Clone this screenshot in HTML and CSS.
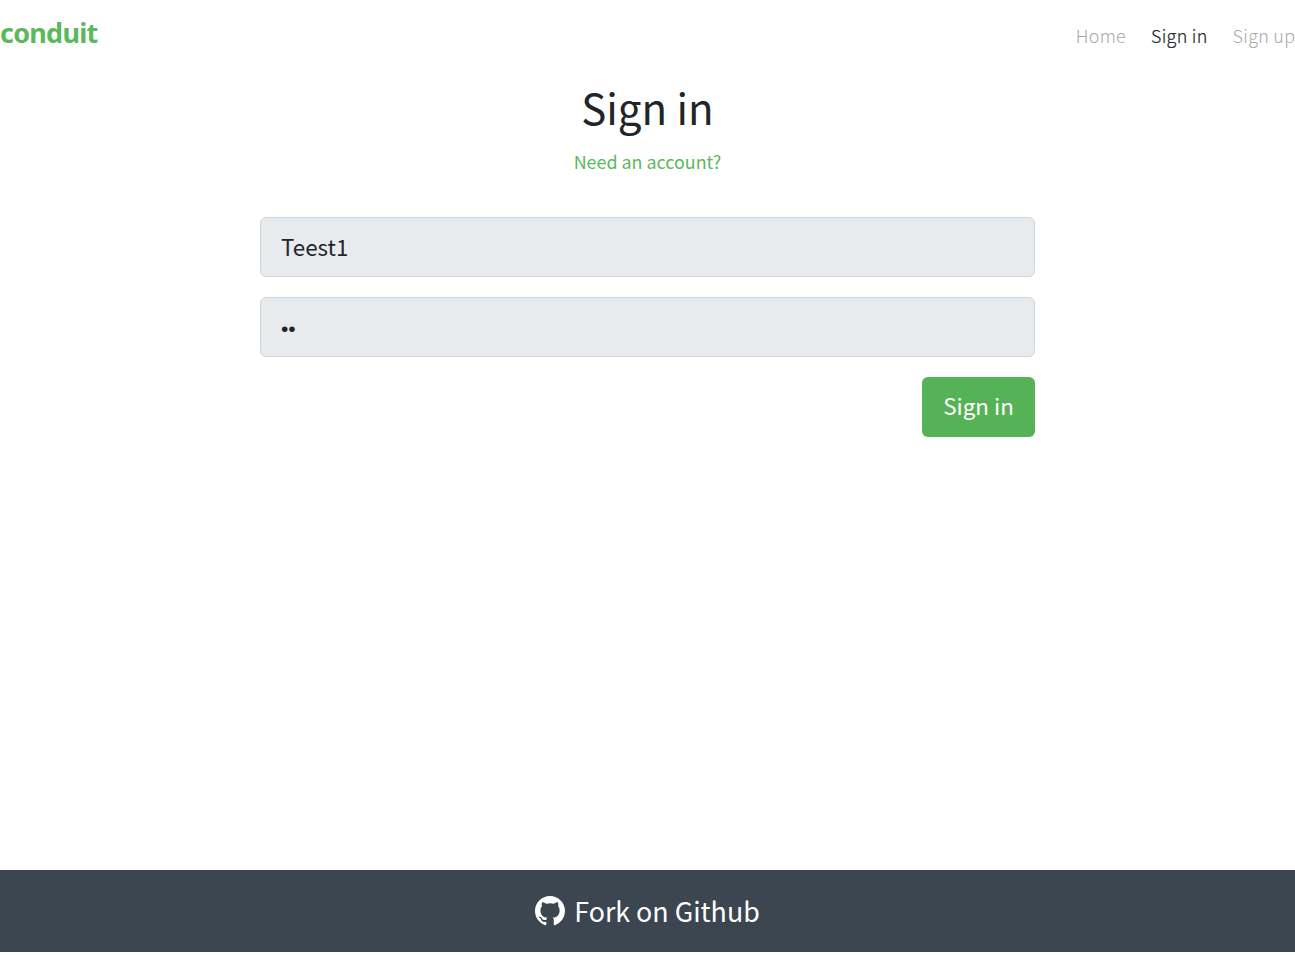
FILE: index.html
```html
<!DOCTYPE html>
<html lang="en">
<head>
<meta charset="utf-8">
<title>Conduit</title>
<link rel="stylesheet" href="styles.css">
</head>
<body class="page">
<nav class="navbar">
  <a class="brand">conduit</a>
  <div class="links"><a class="link">Home</a><a class="link active">Sign in</a><a class="link">Sign up</a></div>
</nav>
<main class="auth">
  <h1 class="title">Sign in</h1>
  <a class="need">Need an account?</a>
  <form class="form">
    <input class="field" type="text" value="Teest1">
    <input class="field password" type="password" value="ab">
    <button class="submit" type="button">Sign in</button>
  </form>
</main>
<footer class="footer">
  <svg class="github" viewBox="0 0 16 16"><path fill="currentColor" d="M8 0C3.58 0 0 3.58 0 8c0 3.54 2.29 6.53 5.47 7.59.4.07.55-.17.55-.38 0-.19-.01-.82-.01-1.49-2.01.37-2.53-.49-2.69-.94-.09-.23-.48-.94-.82-1.13-.28-.15-.68-.52-.01-.53.63-.01 1.08.58 1.23.82.72 1.21 1.87.87 2.33.66.07-.52.28-.87.51-1.07-1.78-.2-3.64-.89-3.64-3.95 0-.87.31-1.59.82-2.15-.08-.2-.36-1.02.08-2.12 0 0 .67-.21 2.2.82.64-.18 1.32-.27 2-.27s1.36.09 2 .27c1.53-1.04 2.2-.82 2.2-.82.44 1.1.16 1.92.08 2.12.51.56.82 1.27.82 2.15 0 3.07-1.87 3.75-3.65 3.95.29.25.54.73.54 1.48v2.2c0 .21.15.46.55.38A8.01 8.01 0 0 0 16 8c0-4.42-3.58-8-8-8z"/></svg>
  <span class="fork">Fork on Github</span>
</footer>
</body>
</html>
```
FILE: styles.css
```css
* { box-sizing: border-box; }
.page { margin: 0; height: 955px; padding-bottom: 3px; display: flex; flex-direction: column; overflow: hidden; background: #fff; color: #212529; font-family: "Noto Sans CJK SC", sans-serif; }
.navbar { height: 70px; display: flex; justify-content: space-between; }
.brand { font: 700 27px/66px "Noto Sans", sans-serif; letter-spacing: -0.75px; color: #5cb85c; }
.links { display: flex; gap: 25px; font-size: 17.9px; line-height: 70px; }
.link { color: #a8a8a8; font-weight: 300; letter-spacing: 0.3px; }
.link:last-child { margin-right: -0.3px; }
.active { color: #222; -webkit-text-stroke: 0.2px #222; }
.auth { flex: 1; display: flex; flex-direction: column; align-items: center; }
.title { margin: 7px 0 0; font-size: 42px; font-weight: 400; line-height: 60px; }
.need { margin-top: 9px; font-size: 17.9px; line-height: 30px; color: #5cb85c; }
.form { width: 775px; margin-top: 41px; display: flex; flex-direction: column; gap: 20px; }
.field { height: 60px; padding: 0 20px 2px; border: 1px solid #ced4da; border-radius: 6px; background: #e8ebee; font: 400 22.4px "Noto Sans CJK SC", sans-serif; color: #212529; }
.password { padding: 4px 20px 0; font: 21px "Liberation Sans", sans-serif; }
.submit { align-self: flex-end; width: 113px; height: 60px; padding: 0 0 4px; border: 0; border-radius: 6px; background: #56b257; color: #fff; font: 400 22.4px "Noto Sans CJK SC", sans-serif; }
.footer { height: 82px; display: flex; justify-content: center; align-items: center; gap: 9px; background: #3c4650; color: #fff; }
.github { width: 30px; height: 30px; }
.fork { font-size: 26.8px; line-height: 40px; }
```
